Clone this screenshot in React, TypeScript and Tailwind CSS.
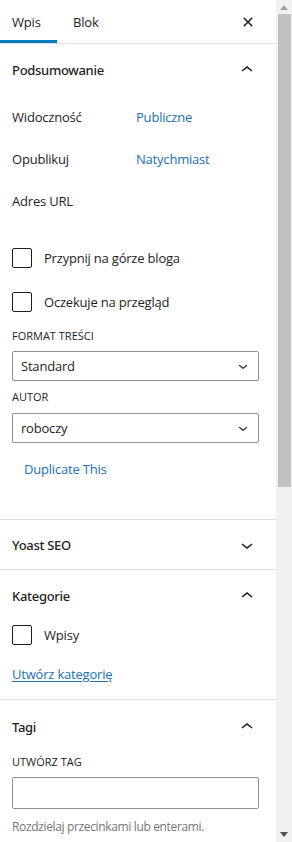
import React from "react";

const ChevronUp = ({ className = "" }: { className?: string }) => (
  <svg viewBox="0 0 24 24" width="24" height="24" className={className} fill="#1e1e1e">
    <path d="M6.5 12.4L12 8l5.5 4.4-.9 1.2L12 10l-4.6 3.6-.9-1.2z" />
  </svg>
);

const ChevronDown = ({ size = 24 }: { size?: number }) => (
  <svg viewBox="0 0 24 24" width={size} height={size} fill="#1e1e1e">
    <path d="M17.5 11.6L12 16l-5.5-4.4.9-1.2L12 14l4.6-3.6.9 1.2z" />
  </svg>
);

const CloseSmall = () => (
  <svg viewBox="0 0 24 24" width="24" height="24" fill="#1e1e1e">
    <path d="M12 13.06l3.712 3.713 1.061-1.06L13.061 12l3.712-3.712-1.06-1.06L12 10.938 8.288 7.227l-1.061 1.06L10.939 12l-3.712 3.712 1.06 1.061L12 13.061z" />
  </svg>
);

function PanelHeader({ title, open, height }: { title: string; open: boolean; height: string }) {
  return (
    <div className={`flex items-center justify-between pl-3 pr-[17px] ${height}`}>
      <span
        className="font-medium tracking-[-0.3px] text-[#1e1e1e]"
        style={{ fontFamily: '"Noto Sans", "Open Sans", sans-serif' }}
      >
        {title}
      </span>
      {open ? <ChevronUp /> : <ChevronDown />}
    </div>
  );
}

function Checkbox({ label }: { label: string }) {
  return (
    <div className="flex items-center gap-3">
      <span className="w-5 h-5 border border-[#1e1e1e] rounded-[2px] bg-white" />
      <span className="text-[#1e1e1e]">{label}</span>
    </div>
  );
}

function SelectBox({ value }: { value: string }) {
  return (
    <div className="flex items-center justify-between h-[30px] border border-[#8c8f94] rounded-[2px] pl-2 pr-[6px]">
      <span className="text-[#1e1e1e]">{value}</span>
      <ChevronDown size={18} />
    </div>
  );
}

function MetaRow({ label, value }: { label: string; value?: string }) {
  return (
    <div className="flex items-center h-[42px] pl-3">
      <span className="w-[124px] text-[#1e1e1e]">{label}</span>
      {value && <span className="text-[#2271b1]">{value}</span>}
    </div>
  );
}

export default function App() {
  return (
    <div
      className="flex h-[842px] w-[292px] overflow-hidden bg-white text-[13px] leading-5 tracking-[-0.2px]"
      style={{ fontFamily: '"Segoe UI", "Open Sans", sans-serif' }}
    >
      <div className="flex-1 flex flex-col min-w-0">
        {/* tabs */}
        <div className="flex items-center h-[44px] border-b border-[#e0e0e0] shrink-0">
          <div className="h-[43px] w-[57px] pl-3 flex items-center text-[#1e1e1e] shadow-[inset_0_-3px_0_#007cba]">
            Wpis
          </div>
          <div className="h-[43px] pl-4 flex items-center text-[#1e1e1e]">Blok</div>
          <div className="ml-auto mr-[16px] flex items-center">
            <CloseSmall />
          </div>
        </div>

        {/* Podsumowanie */}
        <div className="border-b border-[#e0e0e0] pb-[40px]">
          <PanelHeader title="Podsumowanie" open height="h-[52px]" />
          <MetaRow label="Widoczność" value="Publiczne" />
          <MetaRow label="Opublikuj" value="Natychmiast" />
          <MetaRow label="Adres URL" />
          <div className="mt-[14px] pl-3 pr-[17px]">
            <div className="h-[44px] flex items-center">
              <Checkbox label="Przypnij na górze bloga" />
            </div>
            <div className="h-[44px] flex items-center">
              <Checkbox label="Oczekuje na przegląd" />
            </div>
            <div className="mt-[4px] text-[11px] leading-4 font-medium uppercase tracking-normal text-[#1e1e1e]">
              Format treści
            </div>
            <div className="mt-[7px]">
              <SelectBox value="Standard" />
            </div>
            <div className="mt-[8px] text-[11px] leading-4 font-medium uppercase tracking-normal text-[#1e1e1e]">
              Autor
            </div>
            <div className="mt-[8px]">
              <SelectBox value="roboczy" />
            </div>
            <div className="mt-[16px] pl-3 text-[#2271b1]">Duplicate This</div>
          </div>
        </div>

        {/* Yoast */}
        <div className="border-b border-[#e0e0e0]">
          <PanelHeader title="Yoast SEO" open={false} height="h-[49px]" />
        </div>

        {/* Kategorie */}
        <div className="border-b border-[#e0e0e0] pb-[15px]">
          <PanelHeader title="Kategorie" open height="h-[52px]" />
          <div className="pl-3 h-[26px] flex items-center">
            <Checkbox label="Wpisy" />
          </div>
          <div className="pl-3 mt-[16px]">
            <span className="text-[#2271b1] underline underline-offset-2">Utwórz kategorię</span>
          </div>
        </div>

        {/* Tagi */}
        <div>
          <PanelHeader title="Tagi" open height="h-[53px]" />
          <div className="pl-3 pr-[17px]">
            <div className="mt-[1px] text-[11px] leading-4 font-medium uppercase tracking-normal text-[#1e1e1e]">
              Utwórz tag
            </div>
            <div className="mt-[7px] h-[32px] border border-[#8c8f94] rounded-[2px]" />
            <div className="mt-[10px] text-[12px] leading-4 tracking-[-0.35px] text-[#757575]">
              Rozdzielaj przecinkami lub enterami.
            </div>
          </div>
        </div>
      </div>

      {/* scrollbar */}
      <div className="w-4 shrink-0 bg-[#f1f1f1] flex flex-col items-center">
        <div className="h-[14px] flex items-center justify-center">
          <svg width="8" height="5" viewBox="0 0 8 5">
            <path d="M4 0L8 5H0z" fill="#a3a3a3" />
          </svg>
        </div>
        <div className="w-[13px] h-[473px] bg-[#c1c1c1] ml-[1px]" />
        <div className="mt-auto h-[16px] flex items-center justify-center">
          <svg width="8" height="5" viewBox="0 0 8 5">
            <path d="M0 0H8L4 5z" fill="#505050" />
          </svg>
        </div>
      </div>
    </div>
  );
}
